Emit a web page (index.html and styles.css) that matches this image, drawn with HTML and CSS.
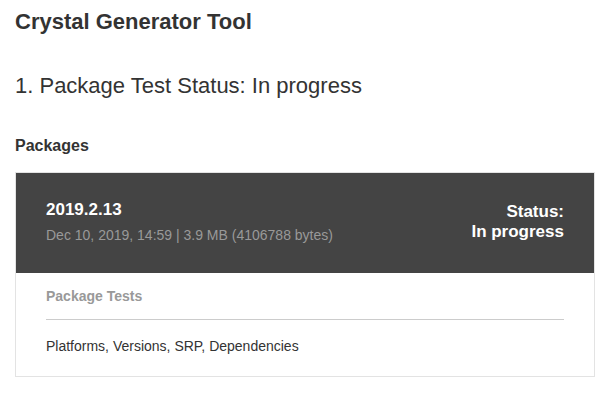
FILE: index.html
```html
<html>
    <head>
        <meta charset="utf-8" />
        <link rel="stylesheet" href="styles.css">
    </head>
    <body>
        <div class="page">
            <h1>Crystal Generator Tool</h1>

            <h2>1. Package Test Status: In progress</h2>

            <h3>Packages</h3>

            <div class="package">
                <div class="package-head">
                    <div class="package-info">
                        <div class="package-version">2019.2.13</div>
                        <div class="package-meta">Dec 10, 2019, 14:59 | 3.9 MB (4106788 bytes)</div>
                    </div>
                    <div class="package-status">Status:<br>In progress</div>
                </div>
                <div class="package-body">
                    <div class="tests-title">Package Tests</div>
                    <div class="tests-list">Platforms, Versions, SRP, Dependencies</div>
                </div>
            </div>
        </div>
    </body>
</html>
```

FILE: styles.css
```css
body {
    margin: 0;
    font-family: "Liberation Sans", Arial, sans-serif;
    color: #333333;
    background-color: white;
}

.page {
    padding: 0px 15px;
}

h1 {
    margin: 0;
    padding-top: 9px;
    font-size: 22px;
    line-height: 26px;
    font-weight: bold;
}

h2 {
    margin: 0;
    padding-top: 38px;
    font-size: 22px;
    line-height: 26px;
    font-weight: normal;
}

h3 {
    margin: 0;
    padding-top: 37px;
    font-size: 16px;
    line-height: 20px;
    font-weight: bold;
}

.package {
    margin-top: 16px;
    border: solid 1px #e3e3e3;
}

.package-head {
    display: flex;
    justify-content: space-between;
    align-items: flex-start;
    height: 100px;
    box-sizing: border-box;
    padding: 27px 30px 0px 30px;
    background-color: #444444;
    color: white;
}

.package-version {
    font-size: 17px;
    line-height: 20px;
    font-weight: bold;
}

.package-meta {
    margin-top: 6px;
    font-size: 14px;
    line-height: 18px;
    color: #999999;
}

.package-status {
    margin-top: 2px;
    text-align: right;
    font-size: 17px;
    line-height: 20px;
    font-weight: bold;
}

.package-body {
    padding: 14px 30px 21px 30px;
}

.tests-title {
    padding-bottom: 14px;
    border-bottom: solid 1px #cccccc;
    font-size: 14px;
    line-height: 18px;
    font-weight: bold;
    color: #999999;
}

.tests-list {
    padding-top: 17px;
    font-size: 14px;
    line-height: 18px;
}
```
